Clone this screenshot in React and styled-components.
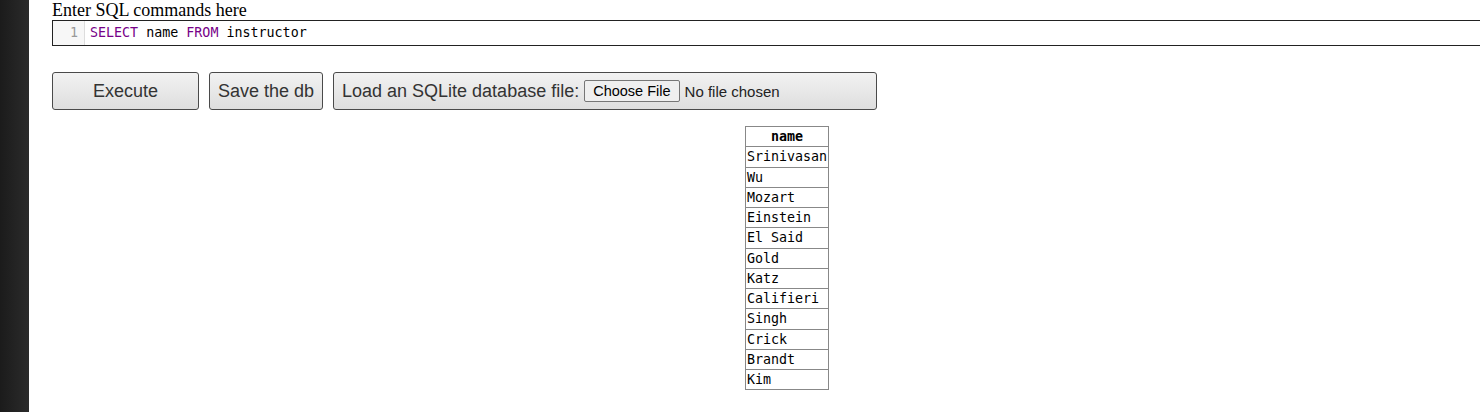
import React from 'react';
import styled, { createGlobalStyle } from 'styled-components';

const GlobalStyle = createGlobalStyle`
  html, body {
    margin: 0;
    padding: 0;
    background: #fff;
    overflow: hidden;
  }
`;

const Page = styled.div`
  display: flex;
  min-height: 412px;
  width: 1480px;
  overflow: hidden;
`;

const SideStrip = styled.div`
  flex: 0 0 29px;
  background: linear-gradient(to right, #1b1b1b, #2b2b2b);
`;

const Main = styled.div`
  flex: 0 0 1470px;
  margin-left: 23px;
  display: flex;
  flex-direction: column;
`;

const Label = styled.label`
  font-family: "Liberation Serif", "Times New Roman", serif;
  font-size: 18px;
  line-height: 20px;
  height: 20px;
  color: #000;
`;

const Editor = styled.div`
  display: flex;
  height: 24px;
  border: 1px solid #222;
  background: #fff;
  font-family: "DejaVu Sans Mono", "Liberation Mono", monospace;
  font-size: 13.33px;
  line-height: 24px;
`;

const Gutter = styled.div`
  width: 25px;
  padding-right: 6px;
  background: #f7f7f7;
  border-right: 1px solid #ddd;
  color: #999;
  text-align: right;
`;

const Code = styled.div`
  padding-left: 5px;
  color: #000;
  white-space: pre;
`;

const Keyword = styled.span`
  color: #708;
`;

const Toolbar = styled.div`
  display: flex;
  gap: 10px;
  margin-top: 26px;
`;

const Button = styled.div`
  box-sizing: border-box;
  display: flex;
  align-items: center;
  justify-content: ${p => (p.$left ? 'flex-start' : 'center')};
  width: ${p => p.$width}px;
  height: 38px;
  padding: 0 8px;
  border: 1px solid #4a4a4a;
  border-radius: 3px;
  background: linear-gradient(to bottom, #f2f2f2, #dedede);
  font-family: "Liberation Sans", Arial, sans-serif;
  font-size: 18px;
  color: #333;
  white-space: nowrap;
`;

const FileButton = styled.span`
  box-sizing: border-box;
  display: inline-flex;
  align-items: center;
  height: 22px;
  margin-left: 5px;
  padding: 0 8px;
  border: 1px solid #767676;
  border-radius: 2px;
  background: #efefef;
  font-size: 14.5px;
  color: #000;
`;

const FileStatus = styled.span`
  margin-left: 5px;
  font-size: 15px;
  color: #222;
`;

const ResultArea = styled.div`
  display: flex;
  justify-content: center;
  margin-top: 16px;
`;

const Table = styled.table`
  border-collapse: collapse;
  font-family: "DejaVu Sans Mono", "Liberation Mono", monospace;
  font-size: 13.33px;
  color: #000;
`;

const HeadCell = styled.th`
  border: 1px solid #888;
  height: 19.25px;
  padding: 0 1px;
  font-weight: bold;
  text-align: center;
`;

const Cell = styled.td`
  border: 1px solid #888;
  height: 19.25px;
  padding: 0 1px;
  text-align: left;
`;

const names = [
  'Srinivasan', 'Wu', 'Mozart', 'Einstein', 'El Said', 'Gold',
  'Katz', 'Califieri', 'Singh', 'Crick', 'Brandt', 'Kim',
];

export default function App() {
  return (
    <>
      <GlobalStyle />
      <Page>
        <SideStrip />
        <Main>
          <Label>Enter SQL commands here</Label>
          <Editor>
            <Gutter>1</Gutter>
            <Code>
              <Keyword>SELECT</Keyword> name <Keyword>FROM</Keyword> instructor
            </Code>
          </Editor>
          <Toolbar>
            <Button $width={147}>Execute</Button>
            <Button $width={114}>Save the db</Button>
            <Button $width={544} $left>
              Load an SQLite database file:
              <FileButton>Choose File</FileButton>
              <FileStatus>No file chosen</FileStatus>
            </Button>
          </Toolbar>
          <ResultArea>
            <Table>
              <thead>
                <tr><HeadCell>name</HeadCell></tr>
              </thead>
              <tbody>
                {names.map(n => (
                  <tr key={n}><Cell>{n}</Cell></tr>
                ))}
              </tbody>
            </Table>
          </ResultArea>
        </Main>
      </Page>
    </>
  );
}
